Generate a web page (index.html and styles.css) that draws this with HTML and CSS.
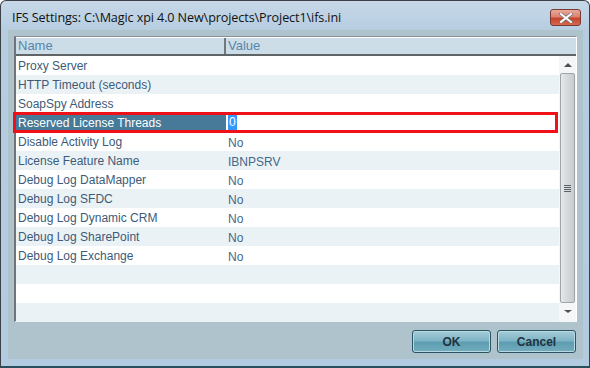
FILE: index.html
```html
<!DOCTYPE html>
<html lang="en">
  <head>
    <meta charset="UTF-8" />
    <title>IFS Settings</title>
    <link rel="stylesheet" href="styles.css">
  </head>
  <body>
    <div class="window">
      <header class="titlebar">
        <span class="title">IFS Settings: C:\Magic xpi 4.0 New\projects\Project1\ifs.ini</span>
        <button class="close">
          <svg width="14" height="10" viewBox="0 0 14 10">
            <path d="M2 1 L12 9 M12 1 L2 9" stroke="#6b6f74" stroke-width="3.4" stroke-linecap="square" />
            <path d="M2 1 L12 9 M12 1 L2 9" stroke="#fff" stroke-width="2" stroke-linecap="square" />
          </svg>
        </button>
      </header>

      <section class="panel">
        <div class="list">
          <div class="head">
            <div class="col-name">Name</div>
            <div class="col-value">Value</div>
          </div>
          <div class="body">
            <div class="rows">
              <div class="row"><span class="col-name">Proxy Server</span><span class="col-value"></span></div>
              <div class="row alt"><span class="col-name">HTTP Timeout (seconds)</span><span class="col-value"></span></div>
              <div class="row"><span class="col-name">SoapSpy Address</span><span class="col-value"></span></div>
              <div class="row selected"><span class="col-name">Reserved License Threads</span><span class="col-value"><span class="edit">0</span></span></div>
              <div class="row"><span class="col-name">Disable Activity Log</span><span class="col-value">No</span></div>
              <div class="row alt"><span class="col-name">License Feature Name</span><span class="col-value">IBNPSRV</span></div>
              <div class="row"><span class="col-name">Debug Log DataMapper</span><span class="col-value">No</span></div>
              <div class="row alt"><span class="col-name">Debug Log SFDC</span><span class="col-value">No</span></div>
              <div class="row"><span class="col-name">Debug Log Dynamic CRM</span><span class="col-value">No</span></div>
              <div class="row alt"><span class="col-name">Debug Log SharePoint</span><span class="col-value">No</span></div>
              <div class="row"><span class="col-name">Debug Log Exchange</span><span class="col-value">No</span></div>
              <div class="row alt"></div>
              <div class="row"></div>
              <div class="row alt"></div>
            </div>
            <div class="scrollbar">
              <div class="arrow up"></div>
              <div class="thumb"><span class="grip"></span></div>
              <div class="arrow down"></div>
            </div>
            <!-- rand om den valgte raekke -->
            <div class="marker"></div>
          </div>
        </div>

        <footer class="buttons">
          <button class="btn">OK</button>
          <button class="btn">Cancel</button>
        </footer>
      </section>
    </div>
  </body>
</html>
```

FILE: styles.css
```css
* {
  margin: 0;
  padding: 0;
  box-sizing: border-box;
}

body {
  width: 590px;
  height: 368px;
  overflow: hidden;
  background: #ffffff;
  font-family: "Liberation Sans", Arial, sans-serif;
}

.window {
  width: 590px;
  height: 368px;
  border: 1px solid #3c4147;
  border-bottom: 2px solid #2a4f5c;
  border-radius: 6px 6px 0 0;
  background: linear-gradient(to bottom, #c6d8e8 0px, #b6cde0 30px, #b3cbe0 100%);
  display: flex;
  flex-direction: column;
}

.titlebar {
  height: 29px;
  display: flex;
  align-items: center;
  justify-content: space-between;
  padding: 0 8px 0 11px;
}

.title {
  font-family: "Open Sans", "Noto Sans", sans-serif;
  font-size: 12.6px;
  color: #111;
  margin-top: 3px;
  letter-spacing: -0.1px;
}

.close {
  width: 31px;
  height: 17px;
  margin-top: 4px;
  border: 1px solid #7a3a33;
  border-radius: 3px;
  background: linear-gradient(to bottom, #e9a99c 0%, #d9826f 45%, #c4432c 55%, #d46a4e 100%);
  display: flex;
  align-items: center;
  justify-content: center;
}

.panel {
  flex: 1;
  margin: 0 6px 7px 7px;
  background: #afc3cd;
  padding: 6px 6px 0 6px;
  display: flex;
  flex-direction: column;
}

.list {
  height: 286px;
  background: #fff;
  border-top: 1px solid #8a9196;
  border-left: 2px solid #6e7479;
  border-right: 1px solid #fff;
  border-bottom: 1px solid #fff;
  display: flex;
  flex-direction: column;
  font-size: 12px;
  color: #3d5b78;
}

.head {
  height: 19px;
  display: flex;
  background: #cddde8;
  border-top: 1px solid #fff;
  border-bottom: 2px solid #5f6467;
  color: #5585aa;
  font-size: 13px;
}

.head .col-name {
  border-right: 2px solid #71777b;
}

.col-name {
  width: 210px;
  padding-left: 2px;
  line-height: 16px;
  white-space: nowrap;
}

.col-value {
  flex: 1;
  padding-left: 2px;
  white-space: nowrap;
}

.body {
  flex: 1;
  display: flex;
  position: relative;
}

.rows {
  flex: 1;
}

.row {
  height: 19px;
  display: flex;
  align-items: center;
}

.row .col-name {
  padding-left: 2px;
  padding-top: 1px;
  line-height: 18px;
}

.row .col-value {
  padding-left: 2px;
  padding-top: 3px;
  color: #44688a;
}

.alt {
  background: #ebf2f6;
}

.selected .col-name {
  background: #467a98;
  color: #fff;
  height: 19px;
}

.selected .col-value {
  padding-top: 0;
}

.edit {
  background: #3399ff;
  color: #fff;
  padding: 0 1px;
  line-height: 15px;
  display: inline-block;
}

.marker {
  position: absolute;
  left: -3px;
  top: 56px;
  width: 545px;
  height: 21px;
  border: 3px solid #f01018;
}

.scrollbar {
  width: 17px;
  background: #f4f6f7;
  display: flex;
  flex-direction: column;
  padding: 0 0 2px 0;
}

.arrow {
  height: 17px;
  position: relative;
}

.arrow::after {
  content: "";
  position: absolute;
  left: 5px;
  border-left: 4px solid transparent;
  border-right: 4px solid transparent;
}

.up::after {
  top: 7px;
  border-bottom: 4px solid #4a4f54;
}

.down::after {
  top: 7px;
  border-top: 3px solid #4a4f54;
}

.thumb {
  flex: 1;
  margin: 0 1px;
  border: 1px solid #9ea4a8;
  border-radius: 2px;
  background: linear-gradient(to right, #e6e9eb, #d5d9dc 50%, #c7ccd0);
  display: flex;
  align-items: center;
  justify-content: center;
}

.grip {
  width: 7px;
  height: 7px;
  background: repeating-linear-gradient(to bottom, #5d6267 0px, #5d6267 1px, transparent 1px, transparent 2px);
}

.buttons {
  display: flex;
  justify-content: flex-end;
  gap: 6px;
  padding: 8px 1px 0 0;
}

.btn {
  width: 79px;
  height: 23px;
  border: 1px solid #2d5462;
  border-radius: 3px;
  background: linear-gradient(to bottom, #a6ccd8 0%, #7fb5c6 45%, #5e9db1 55%, #74adbf 100%);
  font-family: "Liberation Sans", Arial, sans-serif;
  font-weight: bold;
  font-size: 12px;
  color: #21323d;
  box-shadow: inset 0 0 0 1px #b8d8e2;
}
```
